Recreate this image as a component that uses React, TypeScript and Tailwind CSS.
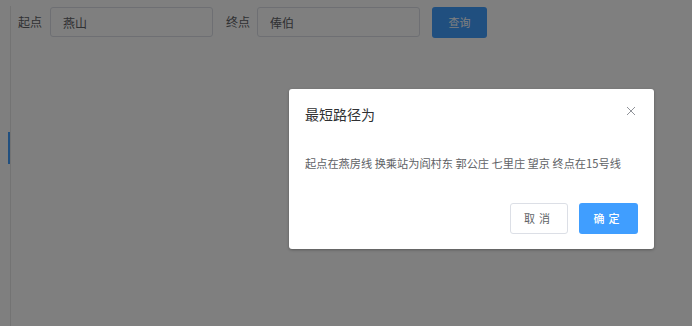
import React, { useState } from 'react';

const font = { fontFamily: '"Noto Sans CJK SC", "Liberation Sans", sans-serif' };

export default function App() {
  const [from, setFrom] = useState('燕山');
  const [to, setTo] = useState('俸伯');
  const [open, setOpen] = useState(true);

  return (
    <div className="relative h-[326px] w-full overflow-hidden bg-white" style={font}>
      <div className="flex h-full">
        {/* sidebar menu */}
        <div className="mt-[6px] w-[11px] border-r border-[#e6e6e6]">
          <div className="mt-[126px] h-[32px] border-r-2 border-[#409eff]" />
        </div>

        {/* query form */}
        <div className="flex h-[45px] items-start pl-[7px] pt-[7px]">
          <span className="mr-[8px] h-[30px] leading-[30px] text-[12px] text-[#606266]">起点</span>
          <input
            value={from}
            onChange={(e) => setFrom(e.target.value)}
            className="h-[30px] w-[163px] rounded-[3px] border border-[#dcdfe6] px-[12px] text-[12px] text-[#606266] outline-none"
          />
          <span className="ml-[13px] mr-[7px] h-[30px] leading-[30px] text-[12px] text-[#606266]">终点</span>
          <input
            value={to}
            onChange={(e) => setTo(e.target.value)}
            className="h-[30px] w-[163px] rounded-[3px] border border-[#dcdfe6] px-[12px] text-[12px] text-[#606266] outline-none"
          />
          <button className="ml-[12px] h-[31px] w-[55px] rounded-[3px] bg-[#409eff] text-[11px] text-white">查询</button>
        </div>
      </div>

      {open && (
        <div className="absolute inset-0 bg-black/50">
          <div className="absolute left-[289px] top-[89px] flex h-[160px] w-[365px] flex-col rounded-[3px] bg-white shadow-[0_1px_3px_rgba(0,0,0,0.3)]">
            <div className="flex items-start justify-between px-[16px] pt-[15px]">
              <span className="text-[14px] leading-[20px] text-[#303133]">最短路径为</span>
              <button onClick={() => setOpen(false)} className="mr-[2px] mt-[2px] text-[#909399]">
                <svg width="10" height="10" viewBox="0 0 10 10" fill="none" stroke="currentColor" strokeWidth="1">
                  <path d="M1 1 L9 9 M9 1 L1 9" />
                </svg>
              </button>
            </div>
            <div className="px-[16px] pt-[31px] text-[11.2px] leading-[16px] text-[#606266]">
              起点在燕房线 换乘站为阎村东 郭公庄 七里庄 望京 终点在15号线
            </div>
            <div className="mt-auto flex justify-end gap-[11px] px-[16px] pb-[15px]">
              <button onClick={() => setOpen(false)} className="h-[31px] w-[58px] rounded-[3px] border border-[#dcdfe6] bg-white text-[11px] tracking-[4px] text-[#606266]">
                取消
              </button>
              <button onClick={() => setOpen(false)} className="h-[31px] w-[59px] rounded-[3px] bg-[#409eff] text-[11px] font-medium tracking-[4px] text-white">
                确定
              </button>
            </div>
          </div>
        </div>
      )}
    </div>
  );
}
